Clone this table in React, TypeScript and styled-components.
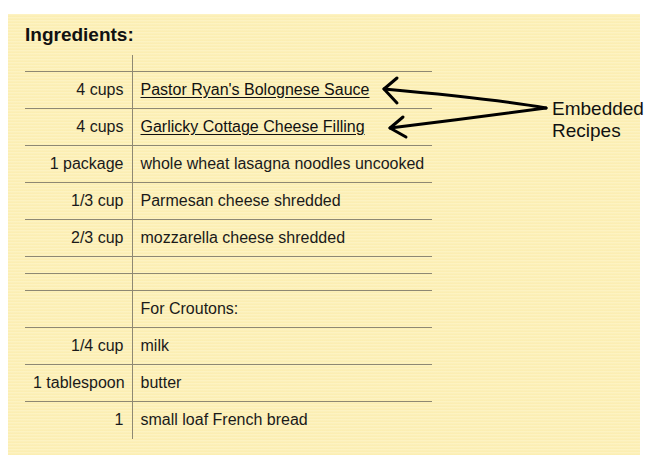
import React from "react";
import styled, { createGlobalStyle } from "styled-components";

const Global = createGlobalStyle`
  html, body { margin: 0; padding: 0; background: #ffffff; }
  body { font-family: "Liberation Sans", Arial, sans-serif; color: #111; }
`;

const Page = styled.div`
  position: relative;
  width: 650px;
  height: 466px;
  padding: 14px 0 0 8px;
  box-sizing: border-box;
`;

const Card = styled.section`
  width: 632px;
  height: 441px;
  box-sizing: border-box;
  padding: 10px 0 0 17px;
  background-color: #fdf0b5;
  background-image: repeating-linear-gradient(
    180deg,
    rgba(255, 255, 255, 0.18) 0px,
    rgba(255, 255, 255, 0.18) 1px,
    rgba(230, 210, 140, 0.12) 2px,
    rgba(255, 255, 255, 0) 3px
  );
`;

const Heading = styled.h2`
  margin: 0 0 9px 0;
  font-size: 19px;
  font-weight: bold;
  line-height: 21.5px;
  color: #111;
`;

const Table = styled.table`
  border-collapse: collapse;
  width: 407px;
  table-layout: fixed;
  font-size: 16px;
  color: #1a1a1a;
`;

const Row = styled.tr<{ $h: number; $last?: boolean }>`
  height: ${(p) => p.$h}px;
  border-bottom: ${(p) => (p.$last ? "none" : "1px solid #8e8873")};
`;

const Qty = styled.td`
  width: 107px;
  padding: 0 8px;
  text-align: right;
  vertical-align: middle;
  border-right: 1px solid #8e8873;
  white-space: nowrap;
  box-sizing: border-box;
`;

const Item = styled.td`
  padding: 0 8px;
  text-align: left;
  vertical-align: middle;
  white-space: nowrap;
`;

const RecipeLink = styled.a`
  color: #111;
  text-decoration: underline;
  text-underline-offset: 2px;
`;

const Overlay = styled.svg`
  position: absolute;
  left: 0;
  top: 0;
  pointer-events: none;
`;

const Note = styled.div`
  position: absolute;
  left: 552px;
  top: 98px;
  font-size: 19px;
  line-height: 21.5px;
  color: #111;
`;

type Ing = { qty: string; item: React.ReactNode; h: number };

const rows: Ing[] = [
  { qty: "", item: "", h: 17 },
  { qty: "4 cups", item: <RecipeLink href="#">Pastor Ryan's Bolognese Sauce</RecipeLink>, h: 37 },
  { qty: "4 cups", item: <RecipeLink href="#">Garlicky Cottage Cheese Filling</RecipeLink>, h: 37 },
  { qty: "1 package", item: "whole wheat lasagna noodles uncooked", h: 37 },
  { qty: "1/3 cup", item: "Parmesan cheese shredded", h: 37 },
  { qty: "2/3 cup", item: "mozzarella cheese shredded", h: 37 },
  { qty: "", item: "", h: 17 },
  { qty: "", item: "", h: 17 },
  { qty: "", item: "For Croutons:", h: 37 },
  { qty: "1/4 cup", item: "milk", h: 37 },
  { qty: "1 tablespoon", item: "butter", h: 37 },
  { qty: "1", item: "small loaf French bread", h: 37 },
];

export default function App() {
  return (
    <Page>
      <Global />
      <Card>
        <Heading>Ingredients:</Heading>
        <Table>
          <tbody>
            {rows.map((r, i) => (
              <Row key={i} $h={r.h} $last={i === rows.length - 1}>
                <Qty>{r.qty}</Qty>
                <Item>{r.item}</Item>
              </Row>
            ))}
          </tbody>
        </Table>
      </Card>
      <Overlay width="650" height="466" viewBox="0 0 650 466">
        <g fill="none" stroke="#000" strokeWidth="3" strokeLinecap="round" strokeLinejoin="round">
          <path d="M546 108 C 500 100, 440 94, 384 89" />
          <path d="M397 78 L384 89 L397 103" />
          <path d="M546 108 C 500 114, 440 122, 390 128" />
          <path d="M403 117 L390 128 L406 137" />
        </g>
      </Overlay>
      <Note>
        Embedded
        <br />
        Recipes
      </Note>
    </Page>
  );
}
